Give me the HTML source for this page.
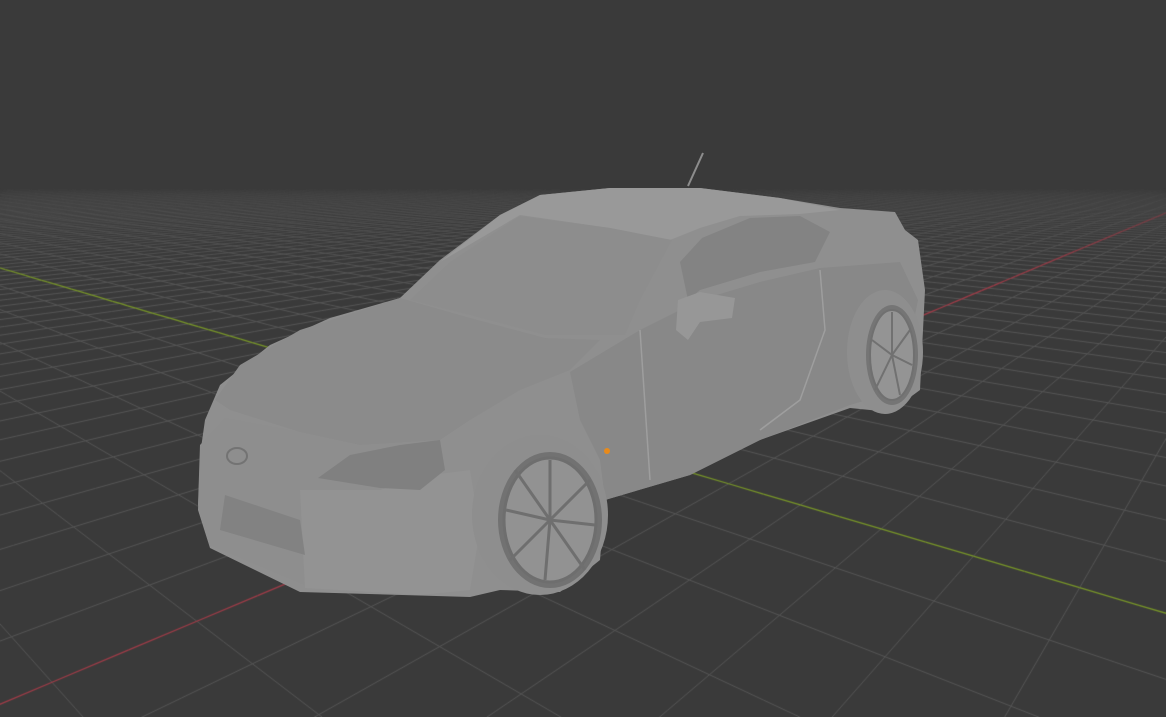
<!DOCTYPE html>
<html><head><meta charset="utf-8"><style>
html,body{margin:0;padding:0;background:#3a3a3a;overflow:hidden}
#c{position:absolute;left:0;top:0}
svg{position:absolute;left:0;top:0}
</style></head><body>
<canvas id="c" width="1166" height="717"></canvas>
<svg width="1166" height="717" viewBox="0 0 1166 717">
<path d="M205,420 L220,385 L270,345 L330,318 L400,298 L440,260 L500,215 L540,195 L610,188 L700,188 L780,198 L840,208 L895,212 L905,230 L918,240 L925,290 L920,390 L890,412 L850,408 L760,440 L690,475 L605,500 L600,560 L560,592 L500,590 L470,597 L300,592 L210,548 L198,510 L200,455 Z" fill="#8f8f8f"/>
<path d="M440,262 L500,215 L540,195 L610,188 L700,188 L780,198 L840,210 L800,214 L740,216 L700,228 L670,240 L610,228 L520,215 Z" fill="#999999"/>
<path d="M410,300 L450,262 L520,216 L610,228 L672,240 L640,300 L625,335 L545,335 L470,315 Z" fill="#8d8d8d"/>
<path d="M680,262 L702,238 L750,218 L800,216 L830,232 L815,262 L760,272 L700,290 L688,300 Z" fill="#838383"/>
<path d="M215,400 L240,365 L300,330 L400,298 L470,318 L545,338 L600,340 L570,370 L520,390 L470,420 L440,440 L360,445 L300,432 L230,410 Z" fill="#8b8b8b"/>
<path d="M570,372 L640,330 L700,300 L760,282 L820,268 L900,262 L918,300 L900,390 L850,405 L760,440 L690,475 L605,500 L600,460 L580,420 Z" fill="#888888"/>
<path d="M200,445 L225,418 L300,432 L360,445 L440,440 L430,470 L380,490 L320,490 L300,525 L305,585 L210,545 L198,505 Z" fill="#8e8e8e"/>
<path d="M300,490 L380,490 L430,475 L470,470 L480,530 L470,590 L420,595 L305,588 Z" fill="#939393"/>
<path d="M318,478 L350,455 L400,445 L440,440 L445,470 L420,490 L380,488 Z" fill="#808080"/>
<path d="M225,495 L300,520 L305,555 L220,530 Z" fill="#828282"/>
<ellipse cx="237" cy="456" rx="10" ry="8" fill="none" stroke="#737373" stroke-width="2"/>
<ellipse cx="540" cy="515" rx="68" ry="80" fill="#8e8e8e"/>
<ellipse cx="550" cy="520" rx="52" ry="68" fill="#727272"/>
<ellipse cx="550" cy="520" rx="46" ry="62" fill="#929292" stroke="#6e6e6e" stroke-width="3"/>
<g stroke="#6f6f6f" stroke-width="3">
<line x1="550" y1="520" x2="550" y2="460"/><line x1="550" y1="520" x2="590" y2="480"/><line x1="550" y1="520" x2="595" y2="525"/><line x1="550" y1="520" x2="585" y2="570"/><line x1="550" y1="520" x2="545" y2="580"/><line x1="550" y1="520" x2="510" y2="560"/><line x1="550" y1="520" x2="506" y2="510"/><line x1="550" y1="520" x2="515" y2="470"/>
</g>
<ellipse cx="885" cy="352" rx="38" ry="62" fill="#8e8e8e"/>
<ellipse cx="892" cy="355" rx="26" ry="50" fill="#757575"/>
<ellipse cx="892" cy="355" rx="22" ry="45" fill="#949494" stroke="#707070" stroke-width="2"/>
<g stroke="#717171" stroke-width="2">
<line x1="892" y1="355" x2="892" y2="312"/><line x1="892" y1="355" x2="910" y2="330"/><line x1="892" y1="355" x2="912" y2="365"/><line x1="892" y1="355" x2="900" y2="395"/><line x1="892" y1="355" x2="875" y2="390"/><line x1="892" y1="355" x2="872" y2="340"/>
</g>
<path d="M678,300 L700,292 L735,298 L732,318 L700,322 L688,340 L676,330 Z" fill="#979797"/>
<path d="M640,330 L650,480 M820,270 L825,330 L800,400 L760,430" stroke="#9e9e9e" stroke-width="1.5" fill="none"/>
<line x1="688" y1="186" x2="703" y2="153" stroke="#8d8d8d" stroke-width="2"/>
<circle cx="607" cy="451" r="3" fill="#e88a1a"/>
</svg>
<script>
var c=document.getElementById('c'),x=c.getContext('2d');
x.fillStyle='#3a3a3a';x.fillRect(0,0,1166,717);
var Vr=[1339,140],Vg=[-432,140],O=[608,448],wr=0.072,wg=0.052;
function P(u,v){var d=1+u*wr+v*wg;if(d<0.03)return null;return [(wr*u*Vr[0]+wg*v*Vg[0]+O[0])/d,(wr*u*Vr[1]+wg*v*Vg[1]+O[1])/d,d];}
function line(f,rgb,w,base){x.lineWidth=w;var prev=null;for(var t=-300;t<=300;t+=0.5){var p=f(t);if(!p){prev=null;continue;}if(prev){var a=base*Math.max(0,Math.min(1,(6.5-p[2])/4.5));if(a>0.01){x.strokeStyle='rgba('+rgb+','+a+')';x.beginPath();x.moveTo(prev[0],prev[1]);x.lineTo(p[0],p[1]);x.stroke();}}prev=p;}}
for(var k=-90;k<=90;k++){
 if(k==0)continue;
 line(function(t){return P(k,t)},'86,86,86',1,1);
 line(function(t){return P(t,k)},'86,86,86',1,1);
}
line(function(t){return P(t,0)},'160,60,72',1.3,1);
line(function(t){return P(0,t)},'120,150,40',1.3,1);
</script>
</body></html>
